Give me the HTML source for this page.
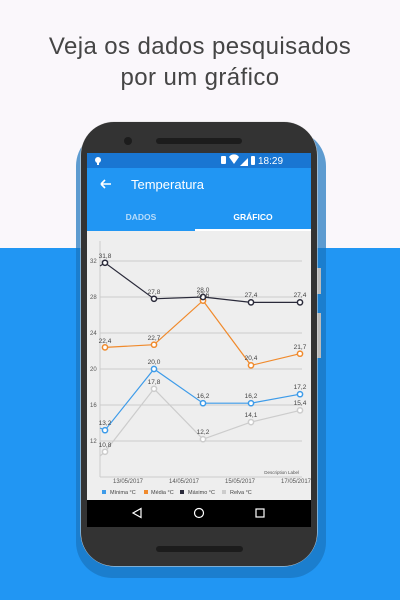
<!DOCTYPE html>
<html><head><meta charset="utf-8"><style>
html,body{margin:0;padding:0;width:400px;height:600px;overflow:hidden;background:#faf7fb;font-family:"Liberation Sans",sans-serif}
.t{position:absolute;left:0;width:400px;text-align:center;color:#454545;font-size:24px;letter-spacing:0.4px;font-family:"Liberation Sans",sans-serif}
</style></head><body>
<div style="position:absolute;left:0;top:248px;width:400px;height:352px;background:#2196f3"></div>
<div class="t" style="top:33px">Veja os dados pesquisados</div>
<div class="t" style="top:64px">por um gráfico</div>
<svg width="400" height="600" style="position:absolute;left:0;top:0" font-family="Liberation Sans, sans-serif">
<rect x="76" y="130" width="250" height="448" rx="36" fill="#1a73bd" opacity="0.7"/>
<rect x="316" y="268" width="5" height="26" fill="#bbb"/>
<rect x="316" y="313" width="5" height="45" fill="#bbb"/>
<rect x="80.5" y="121.5" width="237" height="445" rx="34" fill="#ddd"/>
<rect x="81" y="122" width="236" height="444" rx="33" fill="#333"/>
<circle cx="128" cy="141" r="4" fill="#1c1c1c"/>
<rect x="156" y="138" width="86" height="6" rx="3" fill="#1c1c1c"/>
<rect x="156" y="546" width="87" height="6" rx="3" fill="#1c1c1c"/>
<rect x="87" y="153" width="224" height="15" fill="#1976d2"/>
<rect x="87" y="168" width="224" height="63" fill="#2196f3"/>
<rect x="195" y="229" width="116" height="2" fill="#fff"/>
<rect x="87" y="231" width="224" height="269" fill="#eeeeee"/>
<rect x="87" y="500" width="224" height="27" fill="#000"/>
<g fill="#fff">
<circle cx="98" cy="160" r="3"/><rect x="97" y="162" width="2" height="3"/>
<path d="M240 166 L248 158 L248 166Z"/>
<rect x="251" y="156" width="4" height="9" rx="1"/>
<path d="M229 157 A6 6 0 0 1 239 157 L234 164Z"/>
<rect x="221" y="156" width="5" height="8" rx="1"/>
<text x="258" y="164" font-size="10">18:29</text>
<path d="M101 184 H111 M101 184 L105 180 M101 184 L105 188" stroke="#fff" stroke-width="1.6" fill="none"/>
<text x="131" y="189" font-size="13">Temperatura</text>
<text x="253" y="220" font-size="8.5" font-weight="bold" text-anchor="middle">GRÁFICO</text>
</g>
<text x="141" y="220" font-size="8.5" font-weight="bold" fill="#b8dcfa" text-anchor="middle">DADOS</text>
<g stroke="#ccc" stroke-width="1">
<line x1="100" y1="261" x2="302" y2="261"/><line x1="100" y1="297" x2="302" y2="297"/>
<line x1="100" y1="333" x2="302" y2="333"/><line x1="100" y1="369" x2="302" y2="369"/>
<line x1="100" y1="405" x2="302" y2="405"/><line x1="100" y1="441" x2="302" y2="441"/>
<line x1="100" y1="241" x2="100" y2="477"/><line x1="100" y1="477" x2="302" y2="477"/>
</g>
<g font-size="6" fill="#555">
<text x="90" y="263">32</text><text x="90" y="299">28</text><text x="90" y="335">24</text>
<text x="90" y="371">20</text><text x="90" y="407">16</text><text x="90" y="443">12</text>
<text x="128" y="483" text-anchor="middle">13/05/2017</text><text x="184" y="483" text-anchor="middle">14/05/2017</text>
<text x="240" y="483" text-anchor="middle">15/05/2017</text><text x="296" y="483" text-anchor="middle">17/05/2017</text>
<text x="299" y="474" text-anchor="end" font-size="4.5">Description Label</text>
</g>
<g fill="none" stroke-width="1.2">
<polyline stroke="#cccccc" points="100,456 105,451.8 154,388.8 203,439.2 251,422.1 300,410.4"/>
<polyline stroke="#3d9be9" points="100,428 105,430.2 154,369 203,403.2 251,403.2 300,394.2"/>
<polyline stroke="#f08a2c" points="105,347.4 154,344.7 203,300.6 251,365.4 300,353.7"/>
<polyline stroke="#2a2a3a" points="100,266 105,262.8 154,298.8 203,297 251,302.4 300,302.4"/>
</g>
<g fill="#fff" stroke-width="1.5">
<g stroke="#ccc"><circle cx="105" cy="451.8" r="2.6"/><circle cx="154" cy="388.8" r="2.6"/><circle cx="203" cy="439.2" r="2.6"/><circle cx="251" cy="422.1" r="2.6"/><circle cx="300" cy="410.4" r="2.6"/></g>
<g stroke="#3d9be9"><circle cx="105" cy="430.2" r="2.6"/><circle cx="154" cy="369" r="2.6"/><circle cx="203" cy="403.2" r="2.6"/><circle cx="251" cy="403.2" r="2.6"/><circle cx="300" cy="394.2" r="2.6"/></g>
<g stroke="#f08a2c"><circle cx="105" cy="347.4" r="2.6"/><circle cx="154" cy="344.7" r="2.6"/><circle cx="203" cy="300.6" r="2.6"/><circle cx="251" cy="365.4" r="2.6"/><circle cx="300" cy="353.7" r="2.6"/></g>
<g stroke="#2a2a3a"><circle cx="105" cy="262.8" r="2.6"/><circle cx="154" cy="298.8" r="2.6"/><circle cx="203" cy="297" r="2.6"/><circle cx="251" cy="302.4" r="2.6"/><circle cx="300" cy="302.4" r="2.6"/></g>
</g>
<g font-size="6.5" fill="#444" text-anchor="middle">
<text x="105" y="258">31,8</text><text x="154" y="294">27,8</text><text x="203" y="292">28,0</text><text x="251" y="297">27,4</text><text x="300" y="297">27,4</text>
<text x="105" y="343">22,4</text><text x="154" y="340">22,7</text><text x="203" y="297">27,6</text><text x="251" y="360">20,4</text><text x="300" y="349">21,7</text>
<text x="105" y="425">13,2</text><text x="154" y="364">20,0</text><text x="203" y="398">16,2</text><text x="251" y="398">16,2</text><text x="300" y="389">17,2</text>
<text x="105" y="447">10,8</text><text x="154" y="384">17,8</text><text x="203" y="434">12,2</text><text x="251" y="417">14,1</text><text x="300" y="405">15,4</text>
</g>
<g font-size="5.5" fill="#444">
<rect x="102" y="490" width="4" height="4" fill="#3d9be9"/><text x="110" y="494">Mínima °C</text>
<rect x="144" y="490" width="4" height="4" fill="#f08a2c"/><text x="151" y="494">Média °C</text>
<rect x="180" y="490" width="4" height="4" fill="#2a2a3a"/><text x="188" y="494">Máximo °C</text>
<rect x="222" y="490" width="4" height="4" fill="#ccc"/><text x="230" y="494">Relva °C</text>
</g>
<g fill="none" stroke="#fff" stroke-width="1.2">
<path d="M141 517.5 L133 513 L141 508.5Z"/>
<circle cx="199" cy="513" r="4.5"/>
<rect x="256" y="509" width="8" height="8"/>
</g>
</svg>
</body></html>
